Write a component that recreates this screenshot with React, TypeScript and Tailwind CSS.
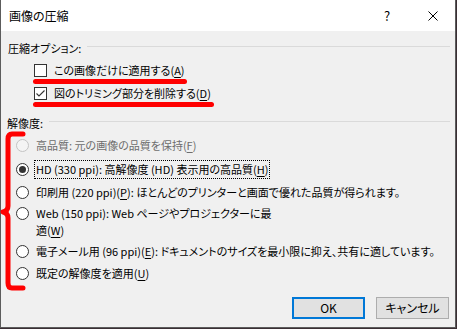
import React from "react";

function U({ children }: { children: React.ReactNode }) {
  return <span className="underline underline-offset-[2px]">{children}</span>;
}

function Radio({ checked, disabled }: { checked?: boolean; disabled?: boolean }) {
  return (
    <span
      className={
        "shrink-0 w-[13px] h-[13px] rounded-full border flex items-center justify-center " +
        (disabled ? "border-[#c4c4c4] bg-[#f4f4f4]" : "border-[#333333] bg-white")
      }
    >
      {checked ? <span className="w-[7px] h-[7px] rounded-full bg-[#333333]" /> : null}
    </span>
  );
}

function RadioRow({
  lines,
  checked,
  disabled,
  focused,
  className,
}: {
  lines: React.ReactNode[];
  checked?: boolean;
  disabled?: boolean;
  focused?: boolean;
  className?: string;
}) {
  return (
    <div className={"flex items-start gap-[5px] pl-[15px] shrink-0 " + (className ?? "")}>
      <span className="h-[19px] flex items-center">
        <Radio checked={checked} disabled={disabled} />
      </span>
      <div
        className={
          "border border-dotted px-[1px] " +
          (focused ? "border-black " : "border-transparent ") +
          (disabled ? "text-[#6d6d6d]" : "text-black")
        }
      >
        {lines.map((l, i) => (
          <div key={i} className="h-[17px] leading-[17px] whitespace-nowrap">
            {l}
          </div>
        ))}
      </div>
    </div>
  );
}

export default function App() {
  return (
    <div className="w-[457px] h-[329px] bg-[#3a2e34] overflow-hidden font-['Noto_Sans_CJK_JP','Noto_Sans',sans-serif] text-[11px] leading-[16px] text-black [font-feature-settings:'palt']">
      <div className="relative w-[456px] h-[328px] bg-[#f0f0f0] border-x border-b border-[#5c5c5c] flex flex-col">
        {/* title bar */}
        <div className="h-[31px] bg-white flex items-center pl-[8px] shrink-0">
          <span className="text-[12px]">画像の圧縮</span>
          <span className="ml-auto w-[10px] text-center text-[13px]">?</span>
          <span className="ml-[36px] mr-[17px] flex items-center">
            <svg width="10" height="10" viewBox="0 0 10 10">
              <path d="M0.5 0.5 L9.5 9.5 M9.5 0.5 L0.5 9.5" stroke="#000" strokeWidth="1" fill="none" />
            </svg>
          </span>
        </div>

        {/* compression options */}
        <div className="mt-[9px] h-[16px] flex items-center pl-[7px] pr-[5px] shrink-0">
          <span>圧縮オプション:</span>
          <span className="ml-[6px] flex-1 h-px bg-[#dadada] -mt-[3px]" />
        </div>
        <div className="mt-[6px] h-[16px] flex items-center pl-[33px] gap-[7px] shrink-0">
          <span className="w-[13px] h-[13px] border border-[#333333] bg-white shrink-0" />
          <span>
            この画像だけに適用する(<U>A</U>)
          </span>
        </div>
        <div className="mt-[7px] h-[16px] flex items-center pl-[33px] gap-[7px] shrink-0">
          <span className="w-[13px] h-[13px] border border-[#333333] bg-white shrink-0 flex items-center justify-center">
            <svg width="11" height="11" viewBox="0 0 11 11">
              <path d="M1.5 5.5 L4 8 L9.5 2.5" stroke="#333" strokeWidth="1.1" fill="none" />
            </svg>
          </span>
          <span>
            図のトリミング部分を削除する(<U>D</U>)
          </span>
        </div>

        {/* resolution */}
        <div className="mt-[14px] h-[16px] flex items-center pl-[6px] pr-[5px] shrink-0">
          <span>解像度:</span>
          <span className="ml-[6px] flex-1 h-px bg-[#dadada] -mt-[3px]" />
        </div>
        <RadioRow
          disabled
          className="mt-[5px]"
          lines={[<>高品質: 元の画像の品質を保持(<U>F</U>)</>]}
        />
        <RadioRow
          checked
          focused
          className="mt-[5px]"
          lines={[<>HD (330 ppi): 高解像度 (HD) 表示用の高品質(<U>H</U>)</>]}
        />
        <RadioRow
          className="mt-[4px]"
          lines={[<>印刷用 (220 ppi)(<U>P</U>): ほとんどのプリンターと画面で優れた品質が得られます。</>]}
        />
        <RadioRow
          className="mt-[2px]"
          lines={[<>Web (150 ppi): Web ページやプロジェクターに最</>, <>適(<U>W</U>)</>]}
        />
        <RadioRow
          className="mt-[2px]"
          lines={[<>電子メール用 (96 ppi)(<U>E</U>): ドキュメントのサイズを最小限に抑え、共有に適しています。</>]}
        />
        <RadioRow className="mt-[3px]" lines={[<>既定の解像度を適用(<U>U</U>)</>]} />

        {/* buttons */}
        <div className="mt-auto flex justify-end gap-[11px] pr-[6px] pb-[8px] shrink-0">
          <button className="w-[73px] h-[22px] border-2 border-[#0078d7] bg-[#e1e1e1] flex items-center justify-center text-[12px]">
            OK
          </button>
          <button className="w-[73px] h-[22px] border border-[#adadad] bg-[#e1e1e1] flex items-center justify-center text-[12px]">
            キャンセル
          </button>
        </div>

        {/* red annotations (overlay) */}
        <span className="absolute left-[32px] top-[79px] w-[154px] h-[5px] rounded-full bg-[#ff0000]" />
        <span className="absolute left-[32px] top-[102px] w-[181px] h-[5px] rounded-full bg-[#ff0000]" />
        <svg className="absolute left-[-1px] top-[128px]" width="26" height="166" viewBox="0 0 26 166">
          <path
            d="M23 6 L12 6 Q8 6 8 11 L8 78 Q8 83 3 84 Q8 85 8 90 L8 155 Q8 160 12 160 L23 160"
            stroke="#ff0000"
            strokeWidth="5"
            fill="none"
            strokeLinecap="round"
            strokeLinejoin="round"
          />
        </svg>
      </div>
    </div>
  );
}
